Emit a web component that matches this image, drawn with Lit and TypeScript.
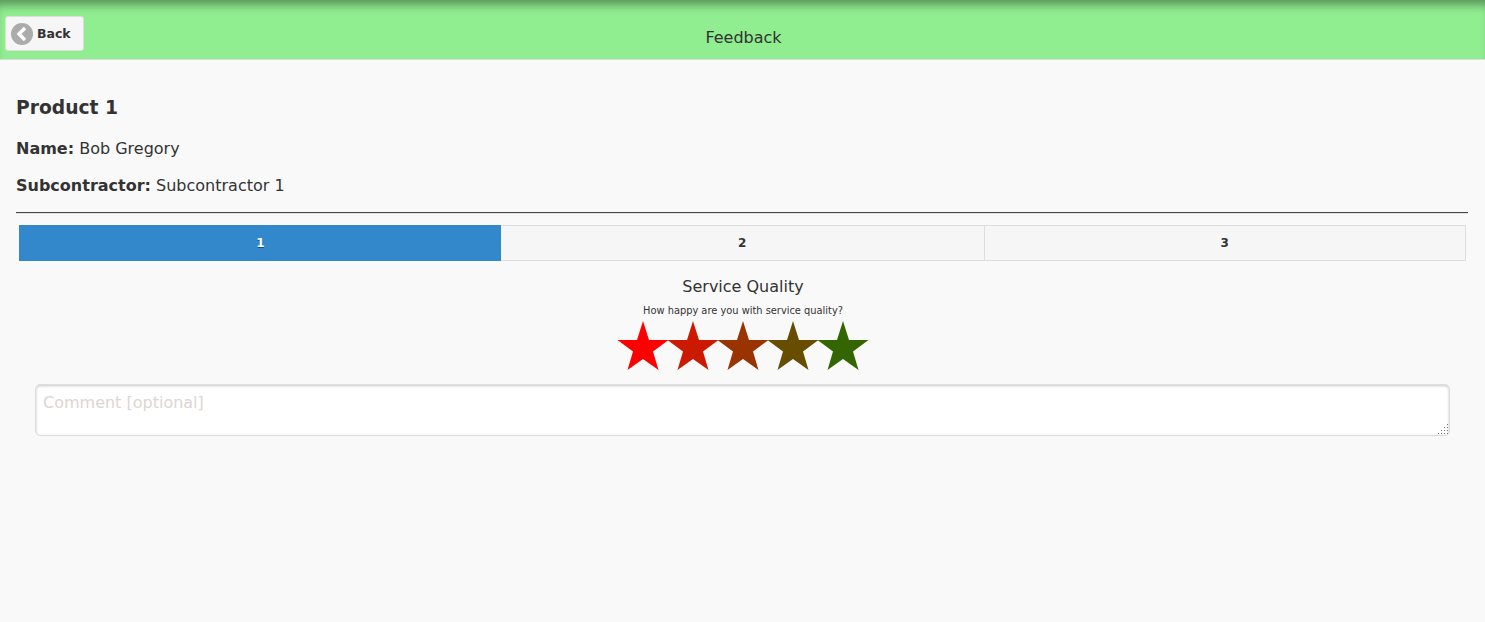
import { LitElement, html, css, svg } from "lit";
import { customElement } from "lit/decorators.js";

const STAR_COLORS = ["#ff0000", "#cc1a00", "#993300", "#664d00", "#336600"];
const GRIP: [number, number][] = [
  [13, 4],
  [10, 7], [13, 7],
  [7, 10], [10, 10], [13, 10],
  [4, 13], [7, 13], [10, 13], [13, 13],
];

@customElement("app-root")
export class AppRoot extends LitElement {
  static styles = css`
    :host {
      display: block;
      min-height: 622px;
      background: #f9f9f9;
      color: #333;
      font-family: "DejaVu Sans", sans-serif;
      overflow: hidden;
    }
    .header {
      height: 59px;
      background: #90ee90;
      border-bottom: 1px solid #dddddd;
      box-shadow: inset 0 10px 10px -5px rgba(0, 0, 0, 0.38);
      display: grid;
      grid-template-columns: 1fr auto 1fr;
      align-items: start;
    }
    .back {
      justify-self: start;
      margin: 16px 0 0 5px;
      width: 79px;
      height: 35px;
      box-sizing: border-box;
      background: #f6f6f6;
      border: 1px solid #dddddd;
      border-radius: 3px;
      display: flex;
      align-items: center;
      gap: 4px;
      padding: 0 0 0 5px;
      font: bold 12.5px "DejaVu Sans", sans-serif;
      color: #333;
      text-shadow: 0 1px 0 #f3f3f3;
    }
    .title {
      margin-top: 29px;
      padding-left: 2px;
      font-size: 16px;
      line-height: 18px;
      color: #333;
    }
    .content {
      padding: 37px 17px 0 16px;
    }
    h2 {
      margin: 0;
      font-size: 18.72px;
      line-height: 22px;
      font-weight: bold;
      color: #333;
    }
    .field {
      margin: 0;
      font-size: 16px;
      line-height: 19px;
    }
    .name {
      margin-top: 20px;
    }
    .sub {
      margin-top: 18px;
    }
    .rule {
      margin-top: 17px;
      height: 1px;
      background: #444;
      box-shadow: 0 1px 0 #e4e4e4;
    }
    .nav {
      margin: 12px 2px 0 3px;
      display: grid;
      grid-template-columns: 482px 483.5px 481.5px;
      height: 36px;
    }
    .tab {
      box-sizing: border-box;
      display: flex;
      align-items: center;
      justify-content: center;
      background: #f6f6f6;
      border: 1px solid #dddddd;
      border-left-width: 0;
      font-size: 12px;
      font-weight: bold;
      color: #333;
    }
    .tab.active {
      padding-left: 2px;
      background: #3388cc;
      border-color: #3388cc;
      color: #fff;
      text-shadow: 0 1px 0 #005599;
    }
    .survey {
      display: flex;
      flex-direction: column;
      align-items: center;
      padding-left: 2px;
    }
    .q-title {
      margin-top: 16px;
      font-size: 16px;
      line-height: 20px;
    }
    .q-text {
      margin-top: 7px;
      font-size: 9.85px;
      line-height: 13px;
    }
    .stars {
      display: flex;
      margin-top: 4px;
      height: 50px;
    }
    .stars svg {
      display: block;
      width: 50px;
      height: 50px;
      overflow: visible;
    }
    .comment {
      position: relative;
      margin: 13px 18px 0 19px;
      height: 52px;
    }
    textarea {
      display: block;
      box-sizing: border-box;
      width: 100%;
      height: 100%;
      padding: 8px 7px;
      resize: none;
      background: #fff;
      border: 1px solid #dddddd;
      border-radius: 5px;
      box-shadow: inset 0 1px 3px rgba(0, 0, 0, 0.22);
      color: #333;
      font: 16px/19px "DejaVu Sans", sans-serif;
      outline: none;
    }
    textarea::placeholder {
      color: #dcd6d2;
      opacity: 1;
    }
    .grip {
      position: absolute;
      right: 1px;
      bottom: 1px;
      width: 15px;
      height: 15px;
      pointer-events: none;
    }
  `;

  render() {
    return html`
      <div class="header">
        <button class="back">
          <svg width="22" height="22" viewBox="0 0 22 22">
            <circle cx="11" cy="11" r="11" fill="#ababab" />
            <path d="M14 5 8 11l6 6" fill="none" stroke="#fff" stroke-width="3.4" />
          </svg>
          Back
        </button>
        <div class="title">Feedback</div>
      </div>
      <div class="content">
        <h2>Product 1</h2>
        <p class="field name"><b>Name:</b> Bob Gregory</p>
        <p class="field sub"><b>Subcontractor:</b> Subcontractor 1</p>
        <div class="rule"></div>
        <div class="nav">
          <div class="tab active">1</div>
          <div class="tab">2</div>
          <div class="tab">3</div>
        </div>
        <div class="survey">
          <div class="q-title">Service Quality</div>
          <div class="q-text">How happy are you with service quality?</div>
          <div class="stars">
            ${STAR_COLORS.map(
              (c) => html`<svg viewBox="0 0 50 50">
                ${svg`<polygon fill=${c} points="25,0 31,19 50.5,19 35,30.5 40.5,49 25,38 9.5,49 15,30.5 -0.5,19 19,19" />`}
              </svg>`
            )}
          </div>
        </div>
        <div class="comment">
          <textarea placeholder="Comment [optional]"></textarea>
          <svg class="grip" viewBox="0 0 15 15">
            ${GRIP.map(([x, y]) => svg`<rect x=${x} y=${y} width="1" height="1" fill="#777" />`)}
          </svg>
        </div>
      </div>
    `;
  }
}
